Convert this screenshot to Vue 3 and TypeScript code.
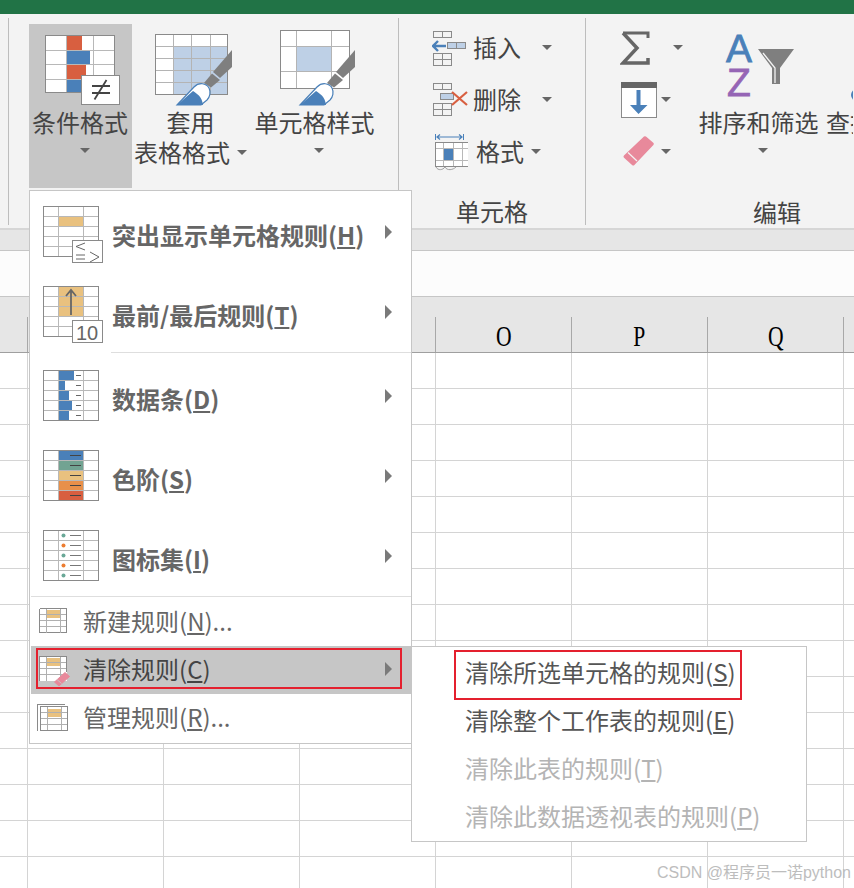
<script setup lang="ts">
const columns = ['L', 'M', 'N', 'O', 'P', 'Q']
const dataBars = [15, 6, 10, 13, 10]
const scaleColors = ['#4a80b9', '#72a392', '#e9c17f', '#e8904a', '#d85f40']
const dotColors = ['#6aa897', '#ed7d31', '#6aa897', '#ed7d31', '#6aa897']
const rows = [0, 1, 2, 3, 4]
const smallRows = [0, 1, 2, 3]
const subItems = [
  { text: '清除所选单元格的规则', key: 'S', off: false, mark: true },
  { text: '清除整个工作表的规则', key: 'E', off: false, mark: false },
  { text: '清除此表的规则', key: 'T', off: true, mark: false },
  { text: '清除此数据透视表的规则', key: 'P', off: true, mark: false }
]
</script>

<template>
  <div class="page">
    <div class="titlebar"></div>

    <div class="ribbon">
      <div class="group styles">
        <div class="big active">
          <svg class="big-icon" width="103" height="83" viewBox="29 24 103 83">
            <g shape-rendering="crispEdges">
              <rect x="45.5" y="35.5" width="69" height="57" fill="#fff" />
              <rect x="67" y="35" width="15" height="15" fill="#d85f40" />
              <rect x="67" y="50" width="23" height="14" fill="#4a80b9" />
              <rect x="67" y="64" width="19" height="15" fill="#d85f40" />
              <rect x="67" y="79" width="14" height="14" fill="#4a80b9" />
              <path d="M45.5 50.5H114.5M45.5 64.5H114.5M45.5 79.5H114.5M66.5 35.5V92.5M93.5 35.5V92.5" stroke="#b8b8b8" fill="none" />
              <rect x="45.5" y="35.5" width="69" height="57" fill="none" stroke="#8a8a8a" />
              <rect x="81.5" y="75.5" width="38" height="29" fill="#fff" stroke="#8a8a8a" />
            </g>
            <path d="M92 86H110M92 93H110M94.5 99.500L106.500 80" stroke="#444" stroke-width="1.800" fill="none" />
          </svg>
          <span class="big-text">条件格式</span>
          <i class="caret big-caret"></i>
        </div>

        <div class="big second">
          <svg class="big-icon" width="118" height="83" viewBox="132 24 118 83">
            <g shape-rendering="crispEdges">
              <rect x="155.5" y="34.5" width="72" height="60" fill="#fff" />
              <rect x="173" y="47" width="55" height="48" fill="#bed0e6" />
              <path d="M155.5 46.5H227.5M155.5 58.5H227.5M155.5 70.5H227.5M155.5 82.5H227.5M173.5 34.5V94.5M191.5 34.5V94.5M210.5 34.5V94.5" stroke="#b4b4b4" fill="none" />
              <rect x="155.5" y="34.5" width="72" height="60" fill="none" stroke="#8a8a8a" />
            </g>
            <path d="M213 72L232 50V67L220 78Z" fill="#7f7f7f" />
            <path d="M204 83L212 73.500L220 80L211 87.500Z" fill="#7f7f7f" />
            <path d="M177 105L194 87C199 82 206 83 209 88C211 92 210 97 207 100L201 105Z" fill="#fff" stroke="#4a80b9" stroke-width="1.2" />
            <path d="M177 105L193 91C197 94 202 96 203 105Z" fill="#4a80b9" />
          </svg>
          <span class="big-text">套用</span>
          <span class="big-text">表格格式<i class="caret inline-caret"></i></span>
        </div>

        <div class="big third">
          <svg class="big-icon" width="130" height="83" viewBox="250 24 130 83">
            <g shape-rendering="crispEdges">
              <rect x="280.5" y="30.500" width="69" height="58" fill="#fff" />
              <rect x="297" y="46" width="35" height="26" fill="#bed0e6" />
              <path d="M280.5 46.500H349.500M280.500 71.500H349.500M296.500 30.500V88.500M331.500 30.500V88.500" stroke="#b4b4b4" fill="none" />
              <rect x="280.500" y="30.500" width="69" height="58" fill="none" stroke="#8a8a8a" />
            </g>
            <path d="M336 72L355 50V67L343 78Z" fill="#7f7f7f" />
            <path d="M327 83L335 73.500L343 80L334 87.500Z" fill="#7f7f7f" />
            <path d="M300 105L317 87C322 82 329 83 332 88C334 92 333 97 330 100L324 105Z" fill="#fff" stroke="#4a80b9" stroke-width="1.200" />
            <path d="M300 105L316 91C320 94 325 96 326 105Z" fill="#4a80b9" />
          </svg>
          <span class="big-text">单元格样式</span>
          <i class="caret big-caret"></i>
        </div>
      </div>

      <div class="group cells">
        <div class="small-col">
          <div class="row">
            <svg class="row-icon" width="36" height="52" viewBox="432 22 36 52">
              <g fill="none" stroke="#8a8a8a" shape-rendering="crispEdges">
                <path d="M433.500 31.500H451.500V37.500H433.500ZM442.500 31.500V37.500" />
                <path d="M433.500 53.500H451.500V65.500H433.500ZM433.500 59.500H451.500M442.500 53.500V65.500" />
                <rect x="447.500" y="42.500" width="18" height="6" fill="#bed0e6" />
                <path d="M456.500 42.500V48.500" />
              </g>
              <path d="M446 46H434M438 41L433 46L438 51" fill="none" stroke="#4a80b9" stroke-width="2.400" />
            </svg>
            <span class="row-text">插入</span>
            <i class="caret c21"></i>
          </div>
          <div class="row">
            <svg class="row-icon" width="36" height="52" viewBox="432 74 36 52">
              <g fill="none" stroke="#8a8a8a" shape-rendering="crispEdges">
                <path d="M433.500 83.500H451.500V89.500H433.500ZM442.500 83.500V89.500" />
                <path d="M433.500 103.500H451.500V115.500H433.500ZM433.500 109.500H451.500M442.500 103.500V115.500" />
                <rect x="440.500" y="93.500" width="13" height="6" fill="#bed0e6" />
              </g>
              <path d="M452 92L467 105M467 92L452 105" fill="none" stroke="#d85f40" stroke-width="2.200" />
            </svg>
            <span class="row-text">删除</span>
            <i class="caret c21"></i>
          </div>
          <div class="row">
            <svg class="row-icon fmt" width="36" height="52" viewBox="432 126 36 52">
              <path d="M435.500 134V140M463.500 134V140" stroke="#4a80b9" fill="none" />
              <path d="M437 137H462M440 134.500L437 137L440 139.500M459 134.500L462 137L459 139.500" stroke="#4a80b9" stroke-width="1.200" fill="none" />
              <g shape-rendering="crispEdges">
                <rect x="435.500" y="142.500" width="33" height="24" fill="#fff" />
                <rect x="444" y="149" width="10" height="11" fill="#4a80b9" />
                <path d="M435.500 148.500H468.500M435.500 160.500H468.500M443.500 142.500V166.500M453.500 142.500V166.500M462.500 142.500V166.500" stroke="#b8b8b8" fill="none" />
                <rect x="435.500" y="142.500" width="33" height="24" fill="none" stroke="#8a8a8a" />
              </g>
              <path d="M436 167C438 171 443 170 445 167C447 171 453 170 456 167" stroke="#a0a0a0" fill="none" />
            </svg>
            <span class="row-text">格式</span>
            <i class="caret c8"></i>
          </div>
        </div>
        <div class="group-label">单元格</div>
      </div>

      <div class="group edit">
        <div class="edit-main">
          <div class="small-col edit-col">
            <div class="row">
              <svg class="row-icon" width="32" height="52" viewBox="620 22 32 52">
                <path d="M623 33H648V38" fill="none" stroke="#666" stroke-width="3" />
                <path d="M623 33L637 48L623 63H648V58" fill="none" stroke="#666" stroke-width="3.500" />
              </svg>
              <i class="caret c21"></i>
            </div>
            <div class="row">
              <svg class="row-icon" width="38" height="52" viewBox="620 74 38 52">
                <g shape-rendering="crispEdges">
                  <rect x="621.500" y="82.500" width="35" height="35" fill="#fff" stroke="#8a8a8a" />
                  <rect x="621" y="82" width="36" height="6" fill="#666" />
                </g>
                <path d="M636.500 90H640.500V105H647.500L638.500 114L630 105H636.500Z" fill="#4a80b9" />
              </svg>
              <i class="caret c4"></i>
            </div>
            <div class="row">
              <svg class="row-icon" width="38" height="52" viewBox="620 126 38 52">
                <path d="M625 156.700L645 137.700L652.300 144L633.300 164Z" fill="#e8899b" stroke="#e8899b" stroke-linejoin="round" stroke-width="3" />
                <path d="M628 152.500L637 161" stroke="#f3f3f3" stroke-width="1.200" />
              </svg>
              <i class="caret c4"></i>
            </div>
          </div>

          <div class="big sort">
            <svg class="big-icon" width="128" height="83" viewBox="695 24 128 83">
              <text x="726" y="62" class="az az-a">A</text>
              <text x="727" y="96" class="az az-z">Z</text>
              <path d="M758 49H794L780 68V84H772V68Z" fill="#7f7f7f" />
              <path d="M763 53L775 68V83" stroke="#f3f3f3" stroke-width="1.300" fill="none" />
            </svg>
            <span class="big-text">排序和筛选</span>
            <i class="caret big-caret"></i>
          </div>

          <div class="big find">
            <svg class="big-icon" width="30" height="83" viewBox="824 24 30 83">
              <circle cx="858" cy="95" r="6" fill="#4a80b9" />
            </svg>
            <span class="big-text">查找和选择</span>
          </div>
        </div>
        <div class="group-label edit-label">编辑</div>
      </div>
    </div>

    <div class="tab-strip"></div>
    <div class="formula"></div>

    <div class="col-head">
      <div class="col-first"></div>
      <div v-for="c in columns" :key="c" class="col-cell"><span class="col-name">{{ c }}</span></div>
    </div>
    <div class="sheet"></div>

    <!-- Conditional formatting menu -->
    <div class="menu">
      <div class="mitem">
        <svg class="micon" width="62" height="60" viewBox="0 0 62 60">
          <g shape-rendering="crispEdges">
            <rect x="16" y="11" width="24" height="9" fill="#e9c17f" />
            <path d="M0.500 10.500H55.500M0.500 20.500H55.500M0.500 30.500H55.500M0.500 40.500H55.500M15.500 0.500V50.500M40.500 0.500V50.500" stroke="#b8b8b8" fill="none" />
            <rect x="0.500" y="0.500" width="55" height="50" fill="none" stroke="#8a8a8a" />
            <rect x="29.500" y="34.500" width="30" height="22" fill="#fff" stroke="#8a8a8a" />
          </g>
          <path d="M42 37L33 40.500L42 44M33 49H42M33 53H42M47 46L56 51L47 56" stroke="#666" fill="none" />
        </svg>
        <span class="mtext">突出显示单元格规则(<u>H</u>)</span>
        <i class="arrow"></i>
      </div>
      <div class="mitem short">
        <svg class="micon" width="62" height="60" viewBox="0 0 62 60">
          <g shape-rendering="crispEdges">
            <rect x="16" y="0" width="24" height="30" fill="#e9c17f" />
            <path d="M0.500 10.500H55.500M0.500 20.500H55.500M0.500 30.500H55.500M0.500 40.500H55.500M15.500 0.500V50.500M40.500 0.500V50.500" stroke="#b8b8b8" fill="none" />
            <rect x="0.500" y="0.500" width="55" height="50" fill="none" stroke="#8a8a8a" />
            <rect x="29.500" y="34.500" width="30" height="22" fill="#fff" stroke="#8a8a8a" />
          </g>
          <path d="M28 29V4M23 10L28 4L33 10" stroke="#666" stroke-width="1.800" fill="none" />
          <text x="33" y="54" class="ten">10</text>
        </svg>
        <span class="mtext">最前/最后规则(<u>T</u>)</span>
        <i class="arrow"></i>
      </div>
      <div class="sep sep-a"></div>
      <div class="mitem">
        <svg class="micon" width="62" height="60" viewBox="0 0 62 60">
          <g shape-rendering="crispEdges">
            <rect v-for="r in rows" :key="r" x="16" :y="r * 10 + 1" :width="dataBars[r]" height="9" fill="#4a80b9" />
            <path v-for="r in rows" :key="'d' + r" :d="`M33 ${r * 10 + 5.5}H38`" stroke="#666" />
            <path d="M0.500 10.500H55.500M0.500 20.500H55.500M0.500 30.500H55.500M0.500 40.500H55.500M15.500 0.500V50.500M40.500 0.500V50.500" stroke="#b8b8b8" fill="none" />
            <rect x="0.500" y="0.500" width="55" height="50" fill="none" stroke="#8a8a8a" />
          </g>
        </svg>
        <span class="mtext">数据条(<u>D</u>)</span>
        <i class="arrow"></i>
      </div>
      <div class="mitem">
        <svg class="micon" width="62" height="60" viewBox="0 0 62 60">
          <g shape-rendering="crispEdges">
            <rect v-for="r in rows" :key="r" x="16" :y="r * 10" width="24" height="10" :fill="scaleColors[r]" />
            <path v-for="r in rows" :key="'d' + r" :d="`M27 ${r * 10 + 5.5}H38`" stroke="#444" />
            <path d="M0.500 10.500H55.500M0.500 20.500H55.500M0.500 30.500H55.500M0.500 40.500H55.500M15.500 0.500V50.500M40.500 0.500V50.500" stroke="#b8b8b8" fill="none" />
            <rect x="0.500" y="0.500" width="55" height="50" fill="none" stroke="#8a8a8a" />
          </g>
        </svg>
        <span class="mtext">色阶(<u>S</u>)</span>
        <i class="arrow"></i>
      </div>
      <div class="mitem short">
        <svg class="micon" width="62" height="60" viewBox="0 0 62 60">
          <g shape-rendering="crispEdges">
            <path d="M0.500 10.500H55.500M0.500 20.500H55.500M0.500 30.500H55.500M0.500 40.500H55.500M15.500 0.500V50.500M40.500 0.500V50.500" stroke="#b8b8b8" fill="none" />
            <rect x="0.500" y="0.500" width="55" height="50" fill="none" stroke="#8a8a8a" />
            <path v-for="r in rows" :key="'d' + r" :d="`M27 ${r * 10 + 5.5}H38`" stroke="#777" />
          </g>
          <circle v-for="r in rows" :key="r" cx="20.500" :cy="r * 10 + 5.500" r="2" :fill="dotColors[r]" />
        </svg>
        <span class="mtext">图标集(<u>I</u>)</span>
        <i class="arrow"></i>
      </div>
      <div class="sep sep-b"></div>

      <div class="sitem">
        <svg class="sicon" width="36" height="48" viewBox="0 0 36 48">
          <g shape-rendering="crispEdges">
            <rect x="9" y="12" width="15" height="8" fill="#e9c17f" />
            <path v-for="r in smallRows" :key="r" :d="`M2.500 ${10.500 + r * 6}H29.500`" stroke="#b0b0b0" />
            <path d="M2.500 34.500H29.500M2.500 10.500V34.500M29.500 10.500V34.500" stroke="#8a8a8a" fill="none" />
            <path d="M2.500 10.500H29.500" stroke="#8a8a8a" />
            <path d="M9.500 10.500V34.500M23.500 10.500V34.500" stroke="#b0b0b0" fill="none" />
          </g>
        </svg>
        <span class="stext">新建规则(<u>N</u>)...</span>
      </div>
      <div class="sitem current">
        <svg class="sicon" width="36" height="48" viewBox="0 0 36 48">
          <g shape-rendering="crispEdges">
            <rect x="2.500" y="10.500" width="27" height="24" fill="#fff" />
            <rect x="9" y="12" width="15" height="8" fill="#e9c17f" />
            <path v-for="r in smallRows" :key="r" :d="`M2.500 ${10.500 + r * 6}H29.500`" stroke="#b0b0b0" />
            <path d="M9.500 10.500V34.500M23.500 10.500V34.500" stroke="#b0b0b0" fill="none" />
            <path d="M2.500 34.500V10.500H29.500V26" stroke="#8a8a8a" fill="none" />
          </g>
          <path d="M17.500 36L28 26.500L32.500 30.500L22 40Z" fill="#e8899b" stroke="#e8899b" stroke-linejoin="round" />
          <path d="M20 33.500L24.500 37.500" stroke="#c6c6c6" />
        </svg>
        <span class="stext dark">清除规则(<u>C</u>)</span>
        <i class="arrow arrow-small"></i>
        <span class="mark mark-left"></span>
      </div>
      <div class="sitem">
        <svg class="sicon" width="36" height="48" viewBox="0 0 36 48">
          <g shape-rendering="crispEdges">
            <path d="M0.500 36.500V10.500H28" stroke="#8a8a8a" fill="none" />
            <rect x="3.500" y="12.500" width="27" height="24" fill="#fff" />
            <rect x="10" y="15" width="15" height="8" fill="#e9c17f" />
            <path v-for="r in smallRows" :key="r" :d="`M3.500 ${12.500 + r * 6}H30.500`" stroke="#b0b0b0" />
            <path d="M10.500 12.500V36.500M24.500 12.500V36.500" stroke="#b0b0b0" fill="none" />
            <rect x="3.500" y="12.500" width="27" height="24" fill="none" stroke="#8a8a8a" />
          </g>
        </svg>
        <span class="stext">管理规则(<u>R</u>)...</span>
      </div>
    </div>

    <!-- Clear rules submenu -->
    <div class="submenu">
      <div v-for="it in subItems" :key="it.key" class="subitem" :class="{ off: it.off }">
        {{ it.text }}(<u>{{ it.key }}</u>)
        <span v-if="it.mark" class="mark mark-right"></span>
      </div>
    </div>

    <div class="watermark">CSDN @程序员一诺python</div>
  </div>
</template>

<style scoped>
.page {
  position: relative;
  width: 854px;
  height: 888px;
  overflow: hidden;
  display: flex;
  flex-direction: column;
  background: #fff;
  color: #444;
  font-family: "Noto Sans CJK SC", "Noto Sans", sans-serif;
  font-size: 24px;
}
.titlebar { height: 14px; background: #217346; flex: none; }
.ribbon {
  box-sizing: border-box;
  height: 216px;
  flex: none;
  display: flex;
  padding: 4px 0 0 8px;
  background: #f3f3f3;
  border-bottom: 2px solid #d6d6d6;
}
.group { height: 207px; box-sizing: border-box; }
.styles {
  width: 391px;
  display: flex;
  align-items: flex-start;
  padding: 6px 0 0 20px;
  border-left: 1px solid #bdbdbd;
  border-right: 1px solid #bdbdbd;
}
.big { display: flex; flex-direction: column; align-items: center; flex: none; height: 164px; }
.big-icon { display: block; flex: none; }
.big-text { display: block; line-height: 30px; white-space: nowrap; margin-left: -1px; }
.active { width: 103px; background: #c6c6c6; }
.second { width: 118px; }
.third { width: 130px; }
.caret {
  display: block;
  width: 0;
  height: 0;
  border-left: 5px solid transparent;
  border-right: 5px solid transparent;
  border-top: 5px solid #666;
  flex: none;
}
.big-caret { margin: 11px 0 0 8px; }
.inline-caret { display: inline-block; margin: 0 0 5px 7px; vertical-align: middle; }
.cells {
  width: 187px;
  border-right: 1px solid #bdbdbd;
  padding-left: 33px;
}
.small-col { height: 176px; padding-top: 4px; box-sizing: border-box; }
.row { display: flex; align-items: center; height: 52px; }
.row-icon { display: block; flex: none; }
.row-text { line-height: 50px; margin: -2px 0 0 5px; white-space: nowrap; }
.fmt + .row-text { margin-left: 8px; }
.c21 { margin: 0 0 2px 21px; }
.c8 { margin: 0 0 2px 7px; }
.c4 { margin: 0 0 2px 3px; }
.group-label { line-height: 30px; margin: 2px 0 0 -33px; text-align: center; }
.edit { flex: 1; min-width: 0; }
.edit-main { display: flex; height: 177px; padding-left: 34px; }
.edit-col { width: 75px; flex: none; }
.sort { width: 128px; margin-top: 6px; }
.find { width: 30px; margin-top: 6px; align-items: flex-start; overflow: hidden; }
.find .big-text { margin-left: 3px; }
.edit-label { margin: 2px 0 0; padding-left: 167px; text-align: left; }
.az { font-family: "Liberation Sans", sans-serif; font-size: 39px; stroke-width: 0.8px; }
.az-a { fill: #4a80b9; stroke: #4a80b9; }
.az-z { fill: #9565b5; stroke: #9565b5; }
.tab-strip { height: 20px; flex: none; background: #e6e6e6; border-bottom: 1px solid #c6c6c6; }
.formula { height: 45px; flex: none; background: #fcfcfc; border-bottom: 1px solid #c6c6c6; }
.col-head {
  box-sizing: border-box;
  height: 56px;
  flex: none;
  display: flex;
  align-items: flex-end;
  background: #e6e6e6;
  border-bottom: 1px solid #9f9f9f;
}
.col-first { width: 27px; height: 35px; flex: none; border-right: 1px solid #a8a8a8; }
.col-cell {
  box-sizing: border-box;
  width: 136px;
  height: 35px;
  flex: none;
  border-right: 1px solid #a8a8a8;
  display: flex;
  align-items: center;
  justify-content: center;
}
.col-name {
  display: inline-block;
  padding-top: 3px;
  font-family: "Liberation Serif", serif;
  font-size: 30px;
  line-height: 32px;
  color: #000;
  transform: scaleX(0.72);
}
.sheet {
  flex: 1;
  background-color: #fff;
  background-image:
    linear-gradient(to bottom, transparent 35px, #d4d4d4 35px),
    linear-gradient(to right, transparent 135px, #d4d4d4 135px);
  background-size: 136px 36px;
  background-position: 28px 0;
}
.menu {
  position: absolute;
  left: 29px;
  top: 190px;
  width: 383px;
  height: 554px;
  box-sizing: border-box;
  padding-top: 5px;
  background: #fff;
  border: 1px solid #c6c6c6;
  color: #666;
}
.mitem {
  display: flex;
  align-items: flex-start;
  height: 80px;
  padding: 10px 0 0 13px;
  box-sizing: border-box;
}
.short { height: 76px; }
.micon { display: block; flex: none; margin-right: 7px; }
.ten { font-family: "Liberation Sans", sans-serif; font-size: 20px; fill: #666; }
.mtext { line-height: 58px; font-weight: 700; white-space: nowrap; }
.arrow {
  display: block;
  width: 0;
  height: 0;
  flex: none;
  margin: 19px 19px 0 auto;
  border-top: 7px solid transparent;
  border-bottom: 7px solid transparent;
  border-left: 7px solid #7a7a7a;
}
.sep { height: 1px; background: #dedede; }
.sep-a { margin: 0 0 7px 81px; }
.sep-b { margin: 0 0 1px 1px; }
.sitem {
  position: relative;
  display: flex;
  align-items: center;
  height: 48px;
  margin-left: 1px;
  padding-left: 6px;
  box-sizing: border-box;
}
.sicon { display: block; flex: none; margin-right: 10px; }
.stext { line-height: 46px; margin-top: -2px; white-space: nowrap; }
.dark { color: #444; }
.current { background: #c6c6c6; }
.arrow-small { margin: -2px 19px 0 auto; }
.mark {
  position: absolute;
  box-sizing: border-box;
  border: 2px solid #e4202e;
}
.mark-left { left: 5px; top: 2px; width: 366px; height: 41px; }
.submenu {
  position: absolute;
  left: 411px;
  top: 646px;
  width: 396px;
  height: 196px;
  box-sizing: border-box;
  padding-top: 2px;
  background: #fff;
  border: 1px solid #c6c6c6;
  color: #555;
}
.subitem {
  position: relative;
  height: 48px;
  line-height: 45px;
  padding-left: 53px;
  white-space: nowrap;
}
.off { color: #b4b4b4; }
.mark-right { left: 42px; top: 1px; width: 288px; height: 50px; }
.watermark {
  position: absolute;
  right: 3px;
  bottom: 5px;
  font-family: "Liberation Sans", "Noto Sans CJK SC", sans-serif;
  font-size: 16px;
  line-height: 20px;
  color: #bdbdbd;
  white-space: nowrap;
}
</style>
